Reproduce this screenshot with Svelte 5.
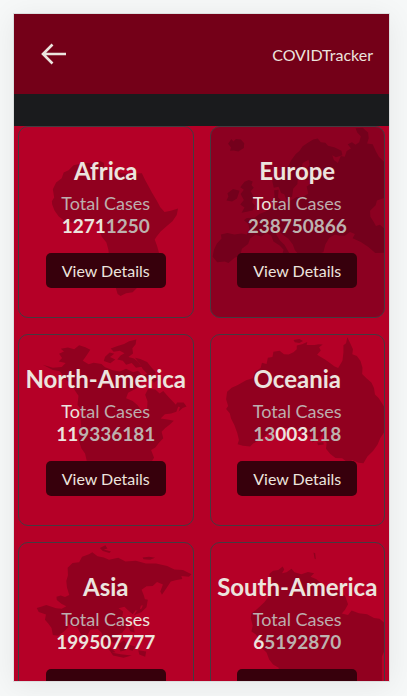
<script>
  const regions = [
    {
      name: 'Africa', box: '24 18 528 576', label: ['', 'Total Cases'], cases: ['1271', '1250', ''],
      land: 'M190 134L222 127L250 128L270 121L282 126L284 143L300 151L320 149L336 158L356 160L398 158L407 177L417 195L428 216L443 241L454 261L467 276L486 272L508 265L504 285L491 304L474 318L455 335L443 350L437 359L444 378L450 399L440 420L424 432L418 450L419 468L408 480L401 500L385 504L370 519L350 522L333 530L324 524L317 500L309 478L301 451L299 420L296 390L290 368L276 351L270 336L274 317L263 303L239 305L218 298L190 308L166 305L145 289L132 271L125 253L124 243L131 232L127 207L137 186L154 173L160 156L175 149Z'
    },
    {
      name: 'Europe', box: '30 18 528 576', label: ['To', 'tal Cases'], cases: ['', '238750866', ''],
      land: 'M82 69L92 54L98 62L106 54L121 56L131 67L130 82L113 92L99 89L88 90L91 80ZM132 184L145 179L157 183L153 194L160 202L151 213L160 230L155 246L164 257L158 270L139 275L123 278L132 262L119 253L130 239L120 221L130 208L119 201ZM80 219L97 206L117 211L109 235L94 244L77 241L83 229ZM470 22L492 20L500 28L508 35L510 52L505 68L522 70L532 92L541 108L558 125L558 233L535 241L531 255L514 272L515 290L524 304L532 318L544 314L558 326L558 399L530 400L509 382L486 367L461 355L468 342L453 336L437 348L421 348L407 344L390 354L378 374L372 398L350 404L320 406L296 404L285 391L279 374L265 356L248 345L232 330L228 343L240 362L254 376L268 400L248 400L251 390L239 377L220 365L213 347L199 340L183 350L165 345L149 356L143 373L124 387L119 408L102 414L83 430L72 426L49 428L35 411L39 390L48 371L62 356L60 344L80 339L101 344L123 341L139 344L147 331L144 312L130 301L139 294L163 293L177 282L193 276L212 264L230 251L224 236L222 210L236 208L234 231L245 243L259 246L278 238L291 230L309 230L326 220L321 198L334 190L351 180L318 179L312 157L330 133L327 117L309 127L302 158L294 174L293 191L280 205L277 229L260 240L253 222L243 218L236 199L221 202L216 180L232 174L247 163L253 145L265 138L274 119L288 100L299 91L309 76L326 65L341 56L355 53L364 64L378 66L386 75L407 80L427 90L430 104L410 110L399 104L404 118L416 127L425 106L437 108L443 91L456 83L446 70L459 64L470 72L481 64L486 46L475 35Z'
    },
    {
      name: 'North-America', box: '24 27 528 576', label: ['To', 'tal Cases'], cases: ['11', '9336181', ''],
      land: 'M96 117L127 126L154 124L166 112L145 107L155 97L146 84L161 77L151 69L173 65L192 70L207 58L226 64L241 72L229 90L218 105L236 116L251 111L275 115L286 125L309 134L331 138L350 129L371 140L386 135L399 149L387 163L398 174L379 190L356 202L350 219L370 227L385 240L396 256L414 251L415 228L408 208L417 190L439 192L452 204L463 197L479 215L493 229L508 245L503 260L487 265L468 267L455 280L476 283L495 287L482 299L469 309L458 320L463 340L450 354L439 368L426 376L435 399L429 408L230 408L225 386L214 371L207 350L205 323L213 302L211 278L215 255L202 239L205 211L190 189L177 171L164 161L145 163L157 149L148 137L127 133ZM286 93L300 80L314 84L301 94L317 101L302 113L282 106ZM303 68L324 60L344 54L359 46L381 41L379 55L369 67L371 83L357 94L374 98L386 108L397 123L380 126L367 112L350 117L340 105L323 101L333 89L345 82L331 75L312 78ZM377 96L393 100L414 109L426 124L440 139L435 151L447 162L435 172L423 158L407 166L402 151L414 144L401 131L392 115ZM505 232L525 232L534 244L522 248L510 259L514 245L499 243Z'
    },
    {
      name: 'Oceania', box: '30 27 528 576', label: ['', 'Total Cases'], cases: ['13', '003', '118'], middle: true,
      land: 'M281 42L299 39L310 45L299 51L285 49ZM445 34L454 53L462 70L460 85L474 91L485 106L491 126L490 145L503 158L518 171L526 188L529 207L540 218L550 233L558 246L558 320L545 340L537 359L523 379L506 395L494 416L479 414L460 406L448 415L429 401L409 400L393 388L380 372L382 354L371 342L370 326L362 339L350 346L339 353L337 337L321 332L304 318L279 310L255 309L225 315L202 326L179 345L158 356L149 365L127 363L111 358L115 345L110 324L101 300L91 280L87 264L76 251L82 242L76 222L79 199L93 187L110 179L137 164L157 158L164 139L181 127L185 111L199 115L203 96L217 94L220 78L239 75L252 85L266 86L281 79L291 70L291 59L307 55L323 48L321 57L345 57L358 55L370 56L359 64L364 74L353 87L364 94L377 101L392 112L405 122L417 127L430 105L433 80L433 58L441 52ZM353 353L372 352L373 359L356 361Z'
    },
    {
      name: 'Asia', box: '24 21 528 576', label: ['', 'Total Ca', 'ses'], cases: ['199507777', '', ''],
      land: 'M270 36L287 28L293 38L282 41L304 47L299 51L279 45ZM400 65L420 63L438 66L423 72L403 70ZM172 96L187 82L207 79L216 63L237 55L247 49L263 61L282 65L298 72L326 66L348 77L380 75L410 83L441 83L475 91L497 101L523 103L549 116L541 123L518 121L521 130L500 134L486 138L472 159L459 178L454 168L462 147L444 139L431 151L412 152L397 163L404 180L411 205L395 211L390 228L379 225L370 237L355 224L345 214L327 219L341 229L338 244L355 254L352 276L337 294L319 300L325 315L312 325L299 314L292 325L303 339L318 352L305 354L292 337L280 311L275 292L263 282L241 284L231 302L221 318L211 295L202 278L187 273L171 266L160 259L175 276L160 290L143 302L127 300L123 279L113 265L103 254L106 238L84 230L78 218L91 214L107 209L123 214L137 219L154 220L168 213L153 205L139 194L138 184L151 180L164 185L177 179L170 156L168 136L173 119ZM406 191L416 193L412 216L397 230L374 240L382 228L398 219ZM354 267L372 274L376 292L363 289ZM324 329L344 316L352 329L350 345L333 350ZM361 330L378 335L370 348L360 345ZM304 353L333 358L367 362L342 369L310 362ZM387 346L411 350L408 366L390 359Z'
    },
    {
      name: 'South-America', box: '30 21 528 576', label: ['', 'Total Cases'], cases: ['6', '5192870', ''],
      land: 'M342 50L347 52L349 70L345 68ZM207 115L219 105L235 103L248 92L253 101L246 113L260 110L275 99L284 110L305 116L325 109L344 113L333 123L351 131L365 144L378 156L398 160L420 169L438 181L447 207L438 223L428 235L447 239L458 226L480 234L505 237L526 248L543 251L558 263L558 347L550 365L550 440L236 440L236 399L219 389L207 374L199 353L183 338L177 315L166 298L153 289L157 271L151 249L153 234L165 226L177 215L193 200L205 184L209 165L214 143Z'
    }
  ];
</script>

<main class="device">
  <header>
    <a href="#home" class="back" aria-label="Back">
      <svg viewBox="0 0 26 22" width="26" height="22" aria-hidden="true">
        <path d="M11.5 1.5L2 11L11.5 20.5M2 11H25" fill="none" stroke="currentColor" stroke-width="2.6" />
      </svg>
    </a>
    <span class="brand">COVIDTracker</span>
  </header>
  <div class="strip"></div>

  <section class="grid">
    {#each regions as r}
      <article class="card" class:selected={r.name === 'Europe'}>
        <svg class="map" viewBox={r.box} preserveAspectRatio="none" aria-hidden="true">
          <path d={r.land} />
        </svg>
        <h2>{r.name}</h2>
        <p class="label"><span class="bright">{r.label[0]}</span>{r.label[1]}<span class="bright">{r.label[2] ?? ''}</span></p>
        <p class="cases">
          {#if r.middle}{r.cases[0]}<span class="bright">{r.cases[1]}</span>{r.cases[2]}{:else}<span class="bright">{r.cases[0]}</span>{r.cases[1]}{/if}
        </p>
        <button type="button">View Details</button>
      </article>
    {/each}
  </section>
</main>

<style>
  :global(body) {
    background: #f6f8f8;
    overflow: hidden;
  }
  .device {
    box-sizing: border-box;
    height: calc(100vh - 27px);
    margin: 13px 17px 14px 13px;
    border: 1px solid #dcdede;
    background: #b50027;
    box-shadow: 0 4px 28px rgba(0, 0, 0, 0.07);
    overflow: hidden;
    color: #ece4de;
    font-family: Lato, sans-serif;
    font-size: 16px;
  }
  header {
    box-sizing: border-box;
    height: 80px;
    padding: 0 16px 0 27px;
    display: flex;
    align-items: center;
    justify-content: space-between;
    background: #740018;
  }
  .back {
    display: flex;
    color: #ece4de;
  }
  .brand {
    line-height: 24px;
    padding-top: 2px;
  }
  .strip {
    height: 32px;
    background: #1a1b1d;
  }
  .grid {
    display: grid;
    grid-template-columns: 1fr 1fr;
    gap: 16px;
    padding: 0 4px;
  }
  .card {
    box-sizing: border-box;
    position: relative;
    min-width: 0;
    height: 192px;
    padding-top: 28px;
    border: 1px solid #453a40;
    border-radius: 10px;
    overflow: hidden;
    display: flex;
    flex-direction: column;
    align-items: center;
    white-space: nowrap;
  }
  .selected {
    background: #8c0021;
  }
  .map {
    position: absolute;
    inset: 0;
    width: 100%;
    height: 100%;
    fill: #91001f;
  }
  .selected .map {
    fill: #74001c;
  }
  h2, p, button {
    position: relative;
    margin: 0;
  }
  h2 {
    font-size: 24px;
    font-weight: 700;
    line-height: 32px;
    margin-bottom: 5px;
  }
  .label {
    font-size: 18px;
    line-height: 22px;
    color: #bdaeae;
  }
  .cases {
    font-size: 19px;
    font-weight: 700;
    line-height: 24px;
    color: #bdb2af;
    margin-bottom: 15px;
  }
  .bright {
    color: #ece4de;
  }
  button {
    height: 35px;
    padding: 0 16px;
    border: 0;
    border-radius: 5px;
    background: #37000c;
    color: #ece4de;
    font: inherit;
  }
</style>
